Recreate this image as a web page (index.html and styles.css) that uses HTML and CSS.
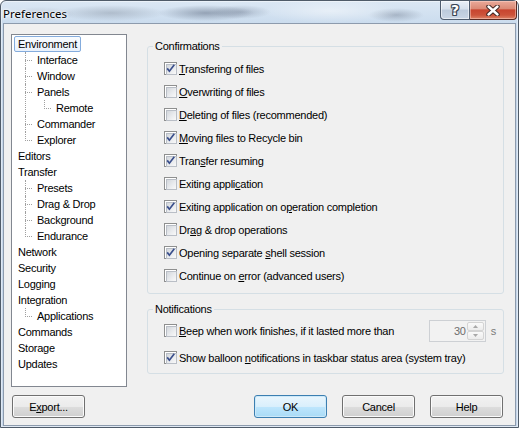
FILE: index.html
```html
<!DOCTYPE html>
<html>
<head>
<meta charset="utf-8">
<title>Preferences</title>
<link rel="stylesheet" href="styles.css">
</head>
<body>
<div class="window">
  <div class="titlebar">
    <span class="title">Preferences</span>
    <div class="caption-buttons">
      <button class="cap cap-help">?</button>
      <button class="cap cap-close">
        <svg width="14" height="11" viewBox="0 0 14 11">
          <path d="M2.5 1.5 L11.5 9.5 M11.5 1.5 L2.5 9.5" stroke="#3b2320" stroke-width="4.4" stroke-linecap="round" fill="none"/>
          <path d="M2.5 1.5 L11.5 9.5 M11.5 1.5 L2.5 9.5" stroke="#ffffff" stroke-width="2.4" stroke-linecap="round" fill="none"/>
        </svg>
      </button>
    </div>
  </div>

  <div class="client">
    <div class="main">
      <div class="tree">
        <ul class="tree-root">
          <li><span class="node selected">Environment</span>
            <ul>
              <li><span class="node">Interface</span></li>
              <li><span class="node">Window</span></li>
              <li><span class="node">Panels</span>
                <ul>
                  <li><span class="node">Remote</span></li>
                </ul>
              </li>
              <li><span class="node">Commander</span></li>
              <li><span class="node">Explorer</span></li>
            </ul>
          </li>
          <li><span class="node">Editors</span></li>
          <li><span class="node">Transfer</span>
            <ul>
              <li><span class="node">Presets</span></li>
              <li><span class="node">Drag &amp; Drop</span></li>
              <li><span class="node">Background</span></li>
              <li><span class="node">Endurance</span></li>
            </ul>
          </li>
          <li><span class="node">Network</span></li>
          <li><span class="node">Security</span></li>
          <li><span class="node">Logging</span></li>
          <li><span class="node">Integration</span>
            <ul>
              <li><span class="node">Applications</span></li>
            </ul>
          </li>
          <li><span class="node">Commands</span></li>
          <li><span class="node">Storage</span></li>
          <li><span class="node">Updates</span></li>
        </ul>
      </div>

      <div class="pages">
        <fieldset class="group confirmations">
          <legend>Confirmations</legend>
          <label class="check"><span class="cb"><svg class="tick" width="11" height="11" viewBox="0 0 11 11"><path d="M2.2 5.4 L4.4 8.2 L9.3 1.8" stroke="#3a4f8c" stroke-width="1.7" fill="none"/></svg></span><span><u>T</u>ransfering of files</span></label>
          <label class="check"><span class="cb"></span><span><u>O</u>verwriting of files</span></label>
          <label class="check"><span class="cb"></span><span><u>D</u>eleting of files (recommended)</span></label>
          <label class="check"><span class="cb"><svg class="tick" width="11" height="11" viewBox="0 0 11 11"><path d="M2.2 5.4 L4.4 8.2 L9.3 1.8" stroke="#3a4f8c" stroke-width="1.7" fill="none"/></svg></span><span><u>M</u>oving files to Recycle bin</span></label>
          <label class="check"><span class="cb"><svg class="tick" width="11" height="11" viewBox="0 0 11 11"><path d="M2.2 5.4 L4.4 8.2 L9.3 1.8" stroke="#3a4f8c" stroke-width="1.7" fill="none"/></svg></span><span>Tran<u>s</u>fer resuming</span></label>
          <label class="check"><span class="cb"></span><span>Exiting appli<u>c</u>ation</span></label>
          <label class="check"><span class="cb"><svg class="tick" width="11" height="11" viewBox="0 0 11 11"><path d="M2.2 5.4 L4.4 8.2 L9.3 1.8" stroke="#3a4f8c" stroke-width="1.7" fill="none"/></svg></span><span>Exiting application on o<u>p</u>eration completion</span></label>
          <label class="check"><span class="cb"></span><span>Dr<u>a</u>g &amp; drop operations</span></label>
          <label class="check"><span class="cb"><svg class="tick" width="11" height="11" viewBox="0 0 11 11"><path d="M2.2 5.4 L4.4 8.2 L9.3 1.8" stroke="#3a4f8c" stroke-width="1.7" fill="none"/></svg></span><span>Opening separate <u>s</u>hell session</span></label>
          <label class="check"><span class="cb"></span><span>Continue on <u>e</u>rror (advanced users)</span></label>
        </fieldset>

        <fieldset class="group notifications">
          <legend>Notifications</legend>
          <div class="check beep">
            <span class="cb"></span><span><u>B</u>eep when work finishes, if it lasted more than</span>
            <div class="spin">
              <span class="spin-value">30</span>
              <span class="updown">
                <span class="ud"><svg width="5" height="3" viewBox="0 0 5 3"><path d="M0 3 L2.5 0 L5 3 Z" fill="#a8a8a8"/></svg></span>
                <span class="ud"><svg width="5" height="3" viewBox="0 0 5 3"><path d="M0 0 L2.5 3 L5 0 Z" fill="#a8a8a8"/></svg></span>
              </span>
            </div>
            <span class="unit">s</span>
          </div>
          <label class="check balloon"><span class="cb"><svg class="tick" width="11" height="11" viewBox="0 0 11 11"><path d="M2.2 5.4 L4.4 8.2 L9.3 1.8" stroke="#3a4f8c" stroke-width="1.7" fill="none"/></svg></span><span>Show balloon <u>n</u>otifications in taskbar status area (system tray)</span></label>
        </fieldset>
      </div>
    </div>

    <div class="buttons">
      <button class="btn">E<u>x</u>port...</button>
      <button class="btn default push">OK</button>
      <button class="btn">Cancel</button>
      <button class="btn">Help</button>
    </div>
  </div>
</div>
</body>
</html>
```

FILE: styles.css
```css
* {
  box-sizing: border-box;
}

html,
body {
  margin: 0;
  padding: 0;
}

body {
  width: 519px;
  height: 428px;
  overflow: hidden;
  background: #ffffff;
  font-family: "Liberation Sans", Arial, sans-serif;
  font-size: 11px;
  letter-spacing: -0.25px;
  color: #000000;
}

/* Aero glass frame */
.window {
  width: 519px;
  height: 428px;
  display: flex;
  flex-direction: column;
  padding: 0 2px 1px 2px;
  border: 1px solid #4f5b69;
  border-radius: 6px 6px 0 0;
  background:
    radial-gradient(ellipse 34px 7px at 40px 13px, rgba(120, 128, 140, 0.25), transparent),
    radial-gradient(ellipse 55px 8px at 110px 12px, rgba(95, 105, 120, 0.3), transparent),
    radial-gradient(ellipse 48px 8px at 205px 12px, rgba(55, 68, 92, 0.4), transparent),
    radial-gradient(ellipse 30px 7px at 240px 11px, rgba(80, 92, 115, 0.3), transparent),
    radial-gradient(ellipse 70px 12px at 330px 10px, rgba(255, 255, 255, 0.45), transparent),
    radial-gradient(ellipse 28px 7px at 395px 14px, rgba(70, 80, 100, 0.3), transparent),
    linear-gradient(#dbe7f4 0px, #cbdcee 22px, #c4d6ea 60px, #c6d7eb 100%);
  box-shadow: inset 0 0 0 1px rgba(255, 255, 255, 0.45);
}

.titlebar {
  height: 22px;
  flex: none;
  display: flex;
  align-items: flex-start;
}

.title {
  font-family: "Noto Sans", "Open Sans", sans-serif;
  font-size: 11.5px;
  letter-spacing: 0;
  line-height: 22px;
  padding-top: 2px;
  color: #000000;
  text-shadow: 0 0 5px #ffffff, 0 0 3px #ffffff, 0 0 2px #f4f8fc;
}

.caption-buttons {
  margin-left: auto;
  margin-right: -1px;
  display: flex;
}

.cap {
  height: 19px;
  margin: 0;
  padding: 0;
  border: 1px solid #4e5c6e;
  border-top: none;
  display: flex;
  align-items: center;
  justify-content: center;
}

.cap-help {
  width: 30px;
  border-radius: 0 0 0 4px;
  background: linear-gradient(#eaf0f7 0%, #d6e0ec 45%, #bccadb 50%, #c9d6e5 100%);
  box-shadow: inset 0 0 0 1px rgba(255, 255, 255, 0.55);
  font-family: "DejaVu Sans", sans-serif;
  font-weight: bold;
  font-size: 14px;
  letter-spacing: 0;
  line-height: 17px;
  color: #ffffff;
  text-shadow: 1px 0 0 #3a4656, -1px 0 0 #3a4656, 0 1px 0 #3a4656, 0 -1px 0 #3a4656,
    1px 1px 0 #3a4656, -1px -1px 0 #3a4656, 1px -1px 0 #3a4656, -1px 1px 0 #3a4656;
}

.cap-close {
  width: 47px;
  border-left: none;
  border-color: #5a2a22;
  border-radius: 0 0 4px 0;
  background: linear-gradient(#eaaa9a 0%, #db8a76 42%, #c8452f 50%, #cc533a 78%, #dd8366 100%);
  box-shadow: inset 0 0 0 1px rgba(255, 220, 210, 0.45);
}

/* Dialog client area */
.client {
  flex: 1;
  display: flex;
  flex-direction: column;
  border: 1px solid #8d9bad;
  background: #f0f0f0;
}

.main {
  display: flex;
  padding: 10px 0 0 7px;
  height: 363px;
  flex: none;
}

/* Tree view */
.tree {
  width: 116px;
  height: 353px;
  flex: none;
  border: 1px solid #828790;
  background: #ffffff;
  padding: 1px 0 0 2px;
}

.tree ul {
  list-style: none;
  margin: 0;
  padding: 0;
}

.tree li ul {
  padding-left: 19px;
}

.tree li {
  white-space: nowrap;
}

.tree li li {
  position: relative;
}

/* connector lines */
.tree li li::before {
  content: "";
  position: absolute;
  left: -8px;
  top: 8px;
  width: 7px;
  border-top: 1px dotted #a0a0a0;
}

.tree li li::after {
  content: "";
  position: absolute;
  left: -8px;
  top: 0;
  bottom: 0;
  border-left: 1px dotted #a0a0a0;
}

.tree li li:last-child::after {
  bottom: auto;
  height: 9px;
}

.node {
  display: inline-block;
  height: 16px;
  line-height: 14px;
  padding: 0 3px;
  border: 1px solid transparent;
  border-radius: 2px;
}

.node.selected {
  border-color: #84acdd;
  background: linear-gradient(#f8fbfe, #e9f1fb);
}

/* Option pages */
.pages {
  width: 357px;
  margin-left: 20px;
  padding-top: 5px;
}

.group {
  margin: 0;
  min-width: 0;
  border: 1px solid #d5dfe5;
  border-radius: 3px;
  padding: 4px 0 6px 5px;
}

.group legend {
  padding: 0 2px;
  height: 14px;
  line-height: 14px;
}

.check {
  display: flex;
  align-items: center;
  height: 23px;
  margin-left: 11px;
  white-space: nowrap;
  line-height: 14px;
}

.check u {
  text-underline-offset: 1px;
}

.cb {
  position: relative;
  width: 13px;
  height: 13px;
  flex: none;
  margin-right: 2px;
  border: 1px solid #8e8f8f;
  background: #ffffff;
  padding: 1px;
}

.cb::before {
  content: "";
  display: block;
  width: 9px;
  height: 9px;
  border: 1px solid #b9bec6;
  background: linear-gradient(135deg, #d3d7dc 0%, #e9ebee 55%, #f9f9f9 100%);
}

.cb .tick {
  position: absolute;
  left: 0;
  top: 0;
}

.notifications {
  margin-top: 8px;
  padding: 3px 0 4px 5px;
}

.balloon {
  margin-top: 4px;
}

.spin {
  margin-left: auto;
  width: 57px;
  height: 22px;
  display: flex;
  border: 1px solid #cdd0d4;
  background: #f2f2f2;
}

.spin-value {
  flex: 1;
  text-align: right;
  padding-right: 1px;
  line-height: 20px;
  color: #6d6d6d;
}

.updown {
  width: 17px;
  margin: 1px 1px 1px 0;
  display: flex;
  flex-direction: column;
}

.ud {
  flex: 1;
  display: flex;
  align-items: center;
  justify-content: center;
  border: 1px solid #d4d4d4;
  border-radius: 2px;
  background: linear-gradient(#fafafa, #ececec);
}

.unit {
  margin-left: 5px;
  margin-right: 7px;
  color: #7a7a7a;
}

/* Dialog buttons */
.buttons {
  display: flex;
  height: 23px;
  margin-top: 8px;
  padding: 0 12px 0 8px;
  gap: 15px;
}

.btn {
  width: 73px;
  height: 23px;
  margin: 0;
  padding: 0;
  font-family: "Liberation Sans", Arial, sans-serif;
  font-size: 11px;
  letter-spacing: -0.25px;
  color: #000000;
  border: 1px solid #707070;
  border-radius: 3px;
  background: linear-gradient(#f2f2f2 0%, #ebebeb 50%, #dddddd 51%, #cfcfcf 100%);
  box-shadow: inset 0 0 0 1px #fbfbfb;
}

.btn.default {
  border-color: #3c7fb1;
  background: linear-gradient(#eaf6fd 0%, #d9effc 50%, #bee6fd 51%, #a9dbf6 100%);
  box-shadow: inset 0 0 0 1px #cde9f9;
}

.push {
  margin-left: auto;
}
```
